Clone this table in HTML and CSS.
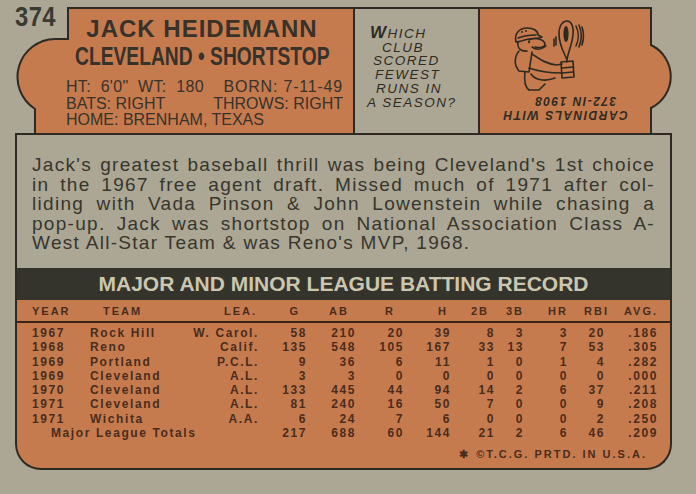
FILE: index.html
```html
<!DOCTYPE html>
<html>
<head>
<meta charset="utf-8">
<title>1972 Topps #374 Jack Heidemann</title>
<link rel="stylesheet" href="styles.css">
</head>
<body>
<div class="card">
  <div class="top">
    <div class="bio">
      <svg class="shape" width="340" height="126" viewBox="0 0 340 126">
        <path class="fill-o" d="M20,126 V102 A38,38 0 0 1 40,32 H53 V1 H339 V126 Z"/>
        <path class="line" d="M20,126 V102 A38,38 0 0 1 40,32 H53 V1 H339 V126"/>
      </svg>
      <div class="num">374</div>
      <div class="bio-body">
        <div class="name">JACK HEIDEMANN</div>
        <div class="team">CLEVELAND • SHORTSTOP</div>
        <div class="vitals">
          <div class="vrow"><span class="ht">HT: 6'0" WT: 180</span><span class="born">BORN: 7-11-49</span></div>
          <div class="vrow"><span>BATS: RIGHT</span><span>THROWS: RIGHT</span></div>
          <div class="vrow"><span>HOME: BRENHAM, TEXAS</span></div>
        </div>
      </div>
    </div>
    <div class="quiz">
      <div class="q q1"><span class="big">W</span>HICH</div>
      <div class="q q2">CLUB</div>
      <div class="q q3">SCORED</div>
      <div class="q q4">FEWEST</div>
      <div class="q q5">RUNS IN</div>
      <div class="q q6">A SEASON?</div>
    </div>
    <div class="art">
      <svg class="shape" width="194" height="126" viewBox="0 0 194 126">
        <path class="fill-o" d="M1,126 V1 H173 V38 A35,35 0 0 1 173,101 V126 Z"/>
        <path class="line" d="M1,126 V1 H173 V38 A35,35 0 0 1 173,101 V126"/>
      </svg>
      <svg class="cartoon" width="90" height="76" viewBox="0 0 90 76">
        <g class="ink">
          <path d="M11,24 C9,16 14,10 22,10 C29,10 33,13 33,17 L37,19 C33,21 28,20 24,21 C19,22 14,24 11,24 Z"/>
          <path d="M13,20 C18,18 24,17 31,17"/>
          <path d="M24,22 C30,19 39,21 40,26 C40,30 34,30 30,29"/>
          <path d="M27,29 C31,32 36,32 41,28"/>
          <path d="M13,24 C12,30 16,34 22,33"/>
          <path d="M14,33 C9,39 9,47 14,53 L24,54 L27,34"/>
          <path d="M27,36 C33,40 40,46 52,47 L57,46"/>
          <path d="M24,50 C35,54 45,55 57,55"/>
          <path d="M20,54 C19,62 20,69 24,72 L34,72 L40,66"/>
          <path d="M26,56 C30,62 40,64 50,60"/>
          <path d="M56,44 L68,43 L69,59 L57,60 Z"/>
          <path d="M57,50 L68,49 M57,55 L68,54"/>
          <path d="M62,42 C60,36 54,28 54,16 C54,7 58,3 62,3 C66,3 69,8 68,17 C67,27 63,34 62,42 L62,44"/>
          <path d="M71,8 C74,14 74,22 71,28"/>
          <path d="M74,7 C77,14 77,22 74,29"/>
          <path d="M77,9 C79,15 79,21 77,27"/>
          <path d="M49,21 L49,28 M51,19 L51,27"/>
        </g>
        <ellipse class="inkfill" cx="61" cy="16" rx="2.6" ry="8"/>
        <circle class="inkfill" cx="24" cy="24" r="1.2"/>
        <circle class="inkfill" cx="17" cy="14" r="1"/>
        <circle class="inkfill" cx="21" cy="13" r="1"/>
      </svg>
      <div class="answer">
        <div class="a1">CARDINALS WITH</div>
        <div class="a2">372-IN 1908</div>
      </div>
    </div>
  </div>

  <div class="blurb">
    <div class="ln">Jack's greatest baseball thrill was being Cleveland's 1st choice</div>
    <div class="ln">in the 1967 free agent draft. Missed much of 1971 after col-</div>
    <div class="ln">liding with Vada Pinson &amp; John Lowenstein while chasing a</div>
    <div class="ln">pop-up. Jack was shortstop on National Association Class A-</div>
    <div class="ln last">West All-Star Team &amp; was Reno's MVP, 1968.</div>
  </div>

  <div class="record">
    <div class="band">MAJOR AND MINOR LEAGUE BATTING RECORD</div>
    <div class="row head">
      <span class="c-year">YEAR</span><span class="c-team">TEAM</span><span>LEA.</span><span>G</span><span>AB</span><span>R</span><span>H</span><span>2B</span><span>3B</span><span>HR</span><span>RBI</span><span>AVG.</span>
    </div>
    <div class="rows">
      <div class="row"><span class="c-year">1967</span><span class="c-team">Rock Hill</span><span>W. Carol.</span><span>58</span><span>210</span><span>20</span><span>39</span><span>8</span><span>3</span><span>3</span><span>20</span><span>.186</span></div>
      <div class="row"><span class="c-year">1968</span><span class="c-team">Reno</span><span>Calif.</span><span>135</span><span>548</span><span>105</span><span>167</span><span>33</span><span>13</span><span>7</span><span>53</span><span>.305</span></div>
      <div class="row"><span class="c-year">1969</span><span class="c-team">Portland</span><span>P.C.L.</span><span>9</span><span>36</span><span>6</span><span>11</span><span>1</span><span>0</span><span>1</span><span>4</span><span>.282</span></div>
      <div class="row"><span class="c-year">1969</span><span class="c-team">Cleveland</span><span>A.L.</span><span>3</span><span>3</span><span>0</span><span>0</span><span>0</span><span>0</span><span>0</span><span>0</span><span>.000</span></div>
      <div class="row"><span class="c-year">1970</span><span class="c-team">Cleveland</span><span>A.L.</span><span>133</span><span>445</span><span>44</span><span>94</span><span>14</span><span>2</span><span>6</span><span>37</span><span>.211</span></div>
      <div class="row"><span class="c-year">1971</span><span class="c-team">Cleveland</span><span>A.L.</span><span>81</span><span>240</span><span>16</span><span>50</span><span>7</span><span>0</span><span>0</span><span>9</span><span>.208</span></div>
      <div class="row"><span class="c-year">1971</span><span class="c-team">Wichita</span><span>A.A.</span><span>6</span><span>24</span><span>7</span><span>6</span><span>0</span><span>0</span><span>0</span><span>2</span><span>.250</span></div>
      <div class="row"><span class="c-total">Major League Totals</span><span>217</span><span>688</span><span>60</span><span>144</span><span>21</span><span>2</span><span>6</span><span>46</span><span>.209</span></div>
    </div>
    <div class="copy"><span class="star">✱</span>©T.C.G. PRTD. IN U.S.A.</div>
  </div>
</div>
</body>
</html>
```

FILE: styles.css
```css
html, body {
  margin: 0;
  padding: 0;
}
body {
  width: 696px;
  height: 494px;
  overflow: hidden;
  background: #aca795;
  font-family: "Liberation Sans", Arial, sans-serif;
  color: #38362c;
}
.card {
  padding: 7px 24px 0 15px;
}

/* ---------- top row ---------- */
.top {
  display: flex;
  height: 126px;
}
.shape {
  position: absolute;
  left: 0;
  top: 0;
  overflow: visible;
}
.fill-o {
  fill: #c67b4f;
}
.line {
  fill: none;
  stroke: #2c2a22;
  stroke-width: 2;
}
.bio {
  position: relative;
  width: 340px;
  flex: none;
}
.num {
  position: absolute;
  left: 0;
  top: -4px;
  font-size: 28px;
  line-height: 28px;
  font-weight: bold;
  letter-spacing: 0.5px;
  color: #3a3a31;
  transform: scaleX(0.85);
  transform-origin: left top;
}
.bio-body {
  position: relative;
  padding: 9px 3px 0 37px;
  display: flex;
  flex-direction: column;
  align-items: center;
  color: #37322a;
}
.name {
  font-size: 24px;
  line-height: 26px;
  font-weight: bold;
  letter-spacing: 1px;
  white-space: nowrap;
}
.team {
  margin-top: 1px;
  font-size: 25px;
  line-height: 26px;
  font-weight: bold;
  white-space: nowrap;
  transform: scaleX(0.77);
}
.vitals {
  align-self: stretch;
  margin: 10px 9px 0 14px;
  font-size: 16px;
  line-height: 16.5px;
}
.vrow {
  display: flex;
  justify-content: space-between;
  white-space: nowrap;
}
.vrow .ht {
  word-spacing: 5px;
  letter-spacing: 0.3px;
}
.vrow .born {
  letter-spacing: 0.8px;
}

/* quiz */
.quiz {
  width: 123px;
  flex: none;
  box-sizing: border-box;
  border-top: 2px solid #2c2a22;
  padding: 18px 0 0 15px;
  font-style: italic;
  font-size: 13.5px;
  line-height: 13.7px;
  letter-spacing: 1.5px;
  color: #2e2b22;
  white-space: nowrap;
}
.quiz .big {
  font-size: 17px;
  line-height: 1px;
  font-weight: bold;
}
.q2 { margin-left: 12px; }
.q3 { margin-left: 3px; }
.q4 { margin-left: 5px; }
.q5 { margin-left: 6px; }
.q6 { margin-left: -3px; }

/* cartoon */
.art {
  position: relative;
  width: 194px;
  flex: none;
  box-sizing: border-box;
  padding: 11px 0 0 27px;
}
.cartoon {
  position: relative;
  display: block;
}
.ink {
  fill: none;
  stroke: #2c2a20;
  stroke-width: 1.6;
  stroke-linecap: round;
  stroke-linejoin: round;
}
.inkfill {
  fill: #2c2a20;
}
.answer {
  position: relative;
  width: 140px;
  margin-left: -10px;
  transform: rotate(180deg);
  font-style: italic;
  font-weight: bold;
  font-size: 12px;
  line-height: 14px;
  letter-spacing: 1.5px;
  text-align: center;
  color: #2e2b22;
  white-space: nowrap;
}
.answer .a2 {
  padding-right: 20px;
}

/* ---------- blurb ---------- */
.blurb {
  border: 2px solid #2c2a22;
  border-bottom: 0;
  padding: 20px 15px 15px;
  font-size: 19px;
  line-height: 19.6px;
  letter-spacing: 1.3px;
  color: #37362c;
}
.blurb .ln {
  text-align: justify;
  text-align-last: justify;
}
.blurb .ln.last {
  text-align-last: left;
}

/* ---------- record ---------- */
.record {
  border: 2px solid #2c2a22;
  border-top: 0;
  border-radius: 0 0 26px 26px;
  background: #c67b4f;
  overflow: hidden;
  padding-bottom: 6.6px;
  color: #4a2c1c;
}
.band {
  height: 32px;
  background: #35342c;
  color: #cbc6b0;
  font-size: 21px;
  line-height: 32px;
  font-weight: bold;
  text-align: center;
  white-space: nowrap;
}
.row {
  display: grid;
  grid-template-columns: 73px 100px 69px 48px 49px 48px 47px 44px 29px 44px 37px 53px;
  white-space: nowrap;
}
.row span {
  text-align: right;
}
.row .c-year {
  text-align: left;
  padding-left: 15px;
}
.row .c-team {
  text-align: left;
}
.row .c-total {
  grid-column: 1 / 4;
  text-align: left;
  padding-left: 34px;
}
.head {
  padding-top: 2px;
  line-height: 19px;
  font-size: 11px;
  font-weight: bold;
  letter-spacing: 2px;
  border-bottom: 2px solid #3a2519;
}
.head span:nth-child(2) { padding-left: 13px; }
.head span:nth-child(3) { padding-right: 2px; }
.head span:nth-child(4) { padding-right: 7px; }
.head span:nth-child(5) { padding-right: 7px; }
.head span:nth-child(6) { padding-right: 9px; }
.head span:nth-child(7) { padding-right: 3px; }
.head span:nth-child(8) { padding-right: 6px; }
.head span:nth-child(11) { margin-right: -4px; }
.rows {
  padding-top: 3px;
}
.rows .row {
  font-size: 12px;
  line-height: 14.3px;
  font-weight: bold;
  letter-spacing: 1.6px;
}
.copy {
  margin-top: 7px;
  padding-right: 23px;
  text-align: right;
  font-size: 11px;
  line-height: 14px;
  font-weight: bold;
  letter-spacing: 2px;
  white-space: nowrap;
}
.copy .star {
  margin-right: 6px;
}
```
